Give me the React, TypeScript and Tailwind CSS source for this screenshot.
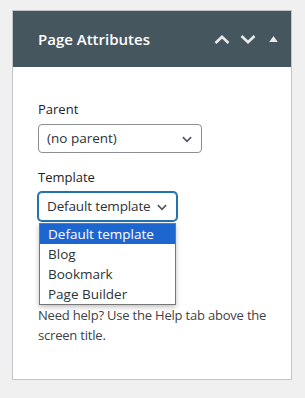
import { ReactNode } from "react";

function Chevron({ dir, className }: { dir: "up" | "down"; className?: string }) {
  return (
    <svg viewBox="0 0 16 16" className={className} fill="none" stroke="currentColor" strokeWidth={2.2}>
      {dir === "up" ? <path d="M2.5 11 8 5.5 13.5 11" /> : <path d="M2.5 5.5 8 11 13.5 5.5" />}
    </svg>
  );
}

function HeaderChevron({ dir }: { dir: "up" | "down" }) {
  return (
    <svg viewBox="0 0 16 9" className="h-[9px] w-[16px]" fill="none" stroke="currentColor" strokeWidth={2.6}>
      {dir === "up" ? <path d="M1.5 8 8 1.8 14.5 8" /> : <path d="M1.5 1 8 7.2 14.5 1" />}
    </svg>
  );
}

function SelectBox({ children, focused, width }: { children: ReactNode; focused?: boolean; width: string }) {
  return (
    <div
      className={`flex h-[29px] items-center justify-between rounded-[4px] border bg-white pl-[8px] pr-[8px] text-[13.5px] text-[#2c3338] ${width} ${
        focused ? "border-[#2271b1] shadow-[0_0_0_1px_#2271b1]" : "border-[#8c8f94]"
      }`}
    >
      <span>{children}</span>
      <Chevron dir="down" className="h-[12px] w-[12px] shrink-0 text-[#50575e]" />
    </div>
  );
}

const options = ["Default template", "Blog", "Bookmark", "Page Builder"];

export default function App() {
  return (
    <div className="min-h-[398px] w-[305px] bg-[#f0f0f1] pl-[12px] pt-[10px] font-['Segoe_UI','Open_Sans',sans-serif]">
      <div className="w-[280px] border border-[#c3c4c7] bg-white">
        <div className="flex h-[56px] items-center justify-between bg-[#46565f] pl-[25px] pr-[13px]">
          <h2 className="text-[15px] font-semibold text-white">Page Attributes</h2>
          <div className="flex items-center text-[#e8ecee]">
            <HeaderChevron dir="up" />
            <span className="w-[10px]" />
            <HeaderChevron dir="down" />
            <svg viewBox="0 0 10 7" className="ml-[13px] h-[6px] w-[9px]" fill="currentColor">
              <path d="M5 0 10 7H0Z" />
            </svg>
          </div>
        </div>
        <div className="px-[25px] pb-[34px] pt-[32px] text-[13px] text-[#1d2327]">
          <p className="leading-[20px]">Parent</p>
          <div className="mt-[5px]">
            <SelectBox width="w-[164px]">(no parent)</SelectBox>
          </div>
          <p className="mt-[14px] leading-[20px]">Template</p>
          <div className="relative mt-[5px]">
            <SelectBox width="w-[139px]" focused>
              <span className="tracking-[-0.15px]">Default template</span>
            </SelectBox>
            <ul className="absolute left-[1px] top-[31px] w-[137px] border border-[#767676] bg-white shadow-[0_2px_5px_rgba(0,0,0,0.25)]">
              {options.map((o, i) => (
                <li
                  key={o}
                  className={`h-[20px] pl-[8px] text-[13.5px] leading-[20px] ${
                    i === 0 ? "bg-[#1e66cf] text-white" : "text-[#2c3338]"
                  }`}
                >
                  {o}
                </li>
              ))}
            </ul>
          </div>
          <p className="mt-[84px] w-[232px] leading-[20px] tracking-[-0.2px] text-[#3c434a]">
            Need help? Use the Help tab above the screen title.
          </p>
        </div>
      </div>
    </div>
  );
}
